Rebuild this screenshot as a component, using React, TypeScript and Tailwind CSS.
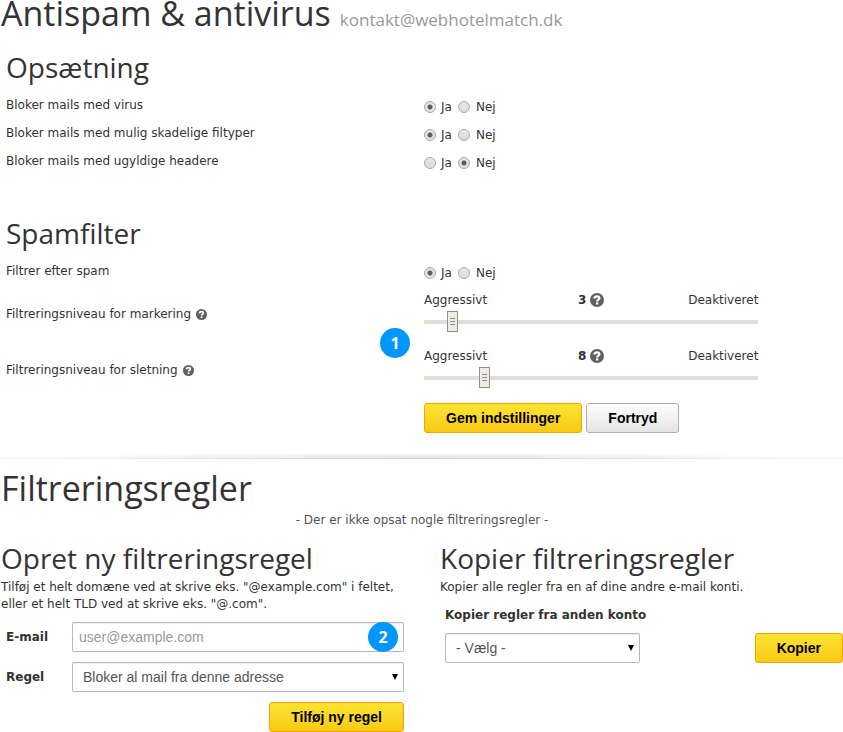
import React from "react";

type YesNoRowProps = {
  name: string;
  label: string;
  value: "ja" | "nej";
};

type LevelRowProps = {
  id: string;
  label: string;
  level: number;
  position: number;
};

type FieldProps = {
  id: string;
  option: string;
};

const HelpIcon = ({ size }: { size: number }) => (
  <svg width={size} height={size} viewBox="0 0 14 14" className="shrink-0">
    <circle cx="7" cy="7" r="7" fill="#5f5f5f" />
    <path
      d="M4.3 5.6C4.5 4.1 5.5 3.4 7 3.4c1.4 0 2.4.7 2.4 1.8 0 1.5-2.2 1.5-2.2 3.2"
      fill="none"
      stroke="#fff"
      strokeWidth="2.2"
    />
    <rect x="6" y="9.4" width="2.3" height="2.1" fill="#fff" />
  </svg>
);

const radioClass =
  "size-3 appearance-none rounded-full border border-[#a8a8a8] bg-linear-to-b from-[#e8e8e8] to-[#dcdcdc] checked:bg-[radial-gradient(circle,#5c5c5c_0_2px,#e3e3e3_3px)]";

const YesNoRow = ({ name, label, value }: YesNoRowProps) => (
  <fieldset className="grid h-7 grid-cols-2">
    <legend className="float-left leading-[26px]">{label}</legend>
    <div className="flex items-center pt-px">
      <label className="flex items-center gap-[5px]">
        <input type="radio" name={name} defaultChecked={value === "ja"} className={radioClass} />
        Ja
      </label>
      <label className="ml-1.5 flex items-center gap-1.5">
        <input type="radio" name={name} defaultChecked={value === "nej"} className={radioClass} />
        Nej
      </label>
    </div>
  </fieldset>
);

const LevelRow = ({ id, label, level, position }: LevelRowProps) => (
  <div className="grid h-14 grid-cols-2">
    <label htmlFor={id} className="flex h-14 items-center gap-[5px]">
      {label}
      <HelpIcon size={11} />
    </label>
    <div className="w-4/5 pt-1.5">
      <div className="grid grid-cols-3 items-center leading-4">
        <span>Aggressivt</span>
        <span className="flex items-center justify-center gap-1 font-bold">
          {level}
          <HelpIcon size={14} />
        </span>
        <span className="text-right">Deaktiveret</span>
      </div>
      <input
        id={id}
        type="range"
        defaultValue={position}
        className="mt-[3px] block h-[21px] w-full appearance-none bg-[linear-gradient(#e1ddd7,#e1ddd7)] bg-size-[100%_4px] bg-center bg-no-repeat [&::-webkit-slider-thumb]:h-[21px] [&::-webkit-slider-thumb]:w-[11px] [&::-webkit-slider-thumb]:appearance-none [&::-webkit-slider-thumb]:border [&::-webkit-slider-thumb]:border-[#918e86] [&::-webkit-slider-thumb]:bg-[#efece6] [&::-webkit-slider-thumb]:bg-[repeating-linear-gradient(#8f8c85_0_1px,transparent_1px_3px)] [&::-webkit-slider-thumb]:bg-size-[5px_7px] [&::-webkit-slider-thumb]:bg-center [&::-webkit-slider-thumb]:bg-no-repeat"
      />
    </div>
  </div>
);

const buttonClass =
  "h-[30px] rounded-[3px] border px-[21px] font-['Liberation_Sans',Arial,sans-serif] text-sm font-bold text-black";
const yellowClass = "border-[#ffa000] bg-linear-to-b from-[#fde432] to-[#f8ca12]";
const fieldClass =
  "h-[30px] w-full appearance-none rounded-[2px] border border-[#b9b9b9] bg-white font-['Liberation_Sans',Arial,sans-serif] text-sm text-[#555] shadow-[inset_0_1px_1px_#eee]";

const SelectField = ({ id, option }: FieldProps) => (
  <div className="relative">
    <select id={id} className={`${fieldClass} px-2.5`}>
      <option>{option}</option>
    </select>
    <svg viewBox="0 0 6 6" className="pointer-events-none absolute top-3 right-1.5 size-1.5">
      <path d="M0 0h6L3 6z" fill="#000" />
    </svg>
  </div>
);

const badgeClass =
  "absolute flex size-[30px] items-center justify-center rounded-full bg-[#0096ff] font-['Open_Sans',sans-serif] text-base font-bold text-white";
const h1Class = "font-['Open_Sans',sans-serif] text-[34px]";
const h2Class = "font-['Open_Sans',sans-serif] text-[28px] leading-8";

const App = () => {
  return (
    <main className="bg-white font-['DejaVu_Sans',Verdana,sans-serif] text-xs text-[#333]">
      <header className="flex items-baseline gap-[9px] pl-px leading-[26px]">
        <h1 className={h1Class}>Antispam &amp; antivirus</h1>
        <span className="font-['Open_Sans',sans-serif] text-[17px] text-[#999]">
          kontakt@webhotelmatch.dk
        </span>
      </header>

      <section className="mt-[18px] pr-px pl-1.5">
        <h2 className={h2Class}>Opsætning</h2>
        <div className="mt-[9px]">
          <YesNoRow name="virus" label="Bloker mails med virus" value="ja" />
          <YesNoRow name="filtyper" label="Bloker mails med mulig skadelige filtyper" value="ja" />
          <YesNoRow name="headere" label="Bloker mails med ugyldige headere" value="nej" />
        </div>
      </section>

      <section className="mt-[41px] pr-px pl-1.5">
        <h2 className={h2Class}>Spamfilter</h2>
        <div className="relative mt-[9px]">
          <YesNoRow name="spam" label="Filtrer efter spam" value="ja" />
          <LevelRow id="markering" label="Filtreringsniveau for markering" level={3} position={7} />
          <LevelRow id="sletning" label="Filtreringsniveau for sletning" level={8} position={17} />
          <span className={`${badgeClass} right-1/2 bottom-10 mr-3.5`}>1</span>
        </div>
        <div className="mt-[5px] ml-[50%] flex gap-1">
          <button className={`${buttonClass} ${yellowClass}`}>Gem indstillinger</button>
          <button
            className={`${buttonClass} border-[#b0b0b0] bg-linear-to-b from-white to-[#e4e4e4]`}
          >
            Fortryd
          </button>
        </div>
      </section>

      <div className="mt-5">
        <div className="h-[5px] bg-[radial-gradient(ellipse_50%_100%_at_bottom,#e2e2e2,#fff)]" />
        <div className="h-px bg-linear-to-r from-[#f6f6f6] via-[#d2d2d2] to-[#f6f6f6]" />
      </div>

      <section className="pl-px">
        <h1 className={`${h1Class} mt-2 leading-[42px]`}>Filtreringsregler</h1>
        <p className="mt-[3px] text-center leading-4 text-[#555]">
          - Der er ikke opsat nogle filtreringsregler -
        </p>
      </section>

      <div className="mt-3.5 grid grid-cols-2 gap-9 pl-px">
        <section>
          <h2 className={h2Class}>Opret ny filtreringsregel</h2>
          <p className="mt-[5px] leading-[17px]">
            Tilføj et helt domæne ved at skrive eks. "@example.com" i feltet, eller et helt TLD ved
            at skrive eks. "@.com".
          </p>
          <form className="mt-[9px] grid grid-cols-[66px_1fr] items-center gap-y-2.5 pl-[5px]">
            <label htmlFor="email" className="font-bold">
              E-mail
            </label>
            <div className="relative">
              <input
                id="email"
                type="email"
                placeholder="user@example.com"
                className={`${fieldClass} px-1.5 placeholder:text-[#999]`}
              />
              <span className={`${badgeClass} top-0 right-1.5`}>2</span>
            </div>
            <label htmlFor="regel" className="font-bold">
              Regel
            </label>
            <SelectField id="regel" option="Bloker al mail fra denne adresse" />
            <button
              type="button"
              className={`${buttonClass} ${yellowClass} col-start-2 justify-self-end`}
            >
              Tilføj ny regel
            </button>
          </form>
        </section>

        <section>
          <h2 className={h2Class}>Kopier filtreringsregler</h2>
          <p className="mt-[5px] leading-[17px]">
            Kopier alle regler fra en af dine andre e-mail konti.
          </p>
          <form className="mt-[9px] pl-[5px]">
            <label htmlFor="konto" className="block leading-5 font-bold">
              Kopier regler fra anden konto
            </label>
            <div className="mt-2 flex justify-between">
              <div className="w-[195px]">
                <SelectField id="konto" option="- Vælg -" />
              </div>
              <button type="button" className={`${buttonClass} ${yellowClass}`}>
                Kopier
              </button>
            </div>
          </form>
        </section>
      </div>
    </main>
  );
};

export default App;
